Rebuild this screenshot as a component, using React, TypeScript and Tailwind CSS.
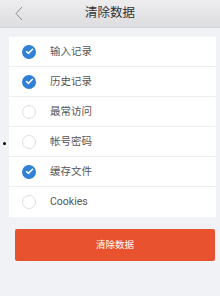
import { Check } from 'lucide-react';

const items = [
  { label: '输入记录', checked: true },
  { label: '历史记录', checked: true },
  { label: '最常访问', checked: false },
  { label: '帐号密码', checked: false },
  { label: '缓存文件', checked: true },
  { label: 'Cookies', checked: false },
];

function CheckCircle({ checked }: { checked: boolean }) {
  if (checked) {
    return (
      <span className="flex h-[14px] w-[14px] items-center justify-center rounded-full bg-[#2f80d6]">
        <Check className="h-[9px] w-[9px] text-white" strokeWidth={4} />
      </span>
    );
  }
  return <span className="h-[14px] w-[14px] rounded-full border border-[#dedede] bg-white" />;
}

export default function App() {
  return (
    <div
      className="relative h-[296px] w-[220px] overflow-hidden bg-[#f1f2f6]"
      style={{ fontFamily: 'Roboto, "Noto Sans CJK SC", sans-serif' }}
    >
      <header className="relative flex h-[28px] items-center justify-center border-b border-[#d6d6d8] bg-gradient-to-b from-[#ededef] to-[#dddde0]">
        <svg className="absolute left-[15px] top-[6px]" width="8" height="15" viewBox="0 0 8 15" fill="none">
          <path d="M7 1L1 7.5L7 14" stroke="#8a8a8c" strokeWidth="1" />
        </svg>
        <h1 className="text-[12.5px] text-[#333]">清除数据</h1>
      </header>

      <ul className="ml-[9px] mr-[4px] mt-[9px] bg-white">
        {items.map((item, i) => (
          <li
            key={item.label}
            className={`flex h-[30px] items-center gap-[14px] pl-[13px] ${i < items.length - 1 ? 'border-b border-[#efefef]' : ''}`}
          >
            <CheckCircle checked={item.checked} />
            <span className="text-[10.5px] text-[#555]">{item.label}</span>
          </li>
        ))}
      </ul>

      <div className="ml-[15px] mr-[5px] mt-[12px]">
        <button className="flex h-[32px] w-full items-center justify-center rounded-[2px] bg-[#e9522f] text-[9.5px] text-white">
          清除数据
        </button>
      </div>

      <span className="absolute left-[3px] top-[142px] h-[3px] w-[3px] rounded-full bg-black" />
    </div>
  );
}
